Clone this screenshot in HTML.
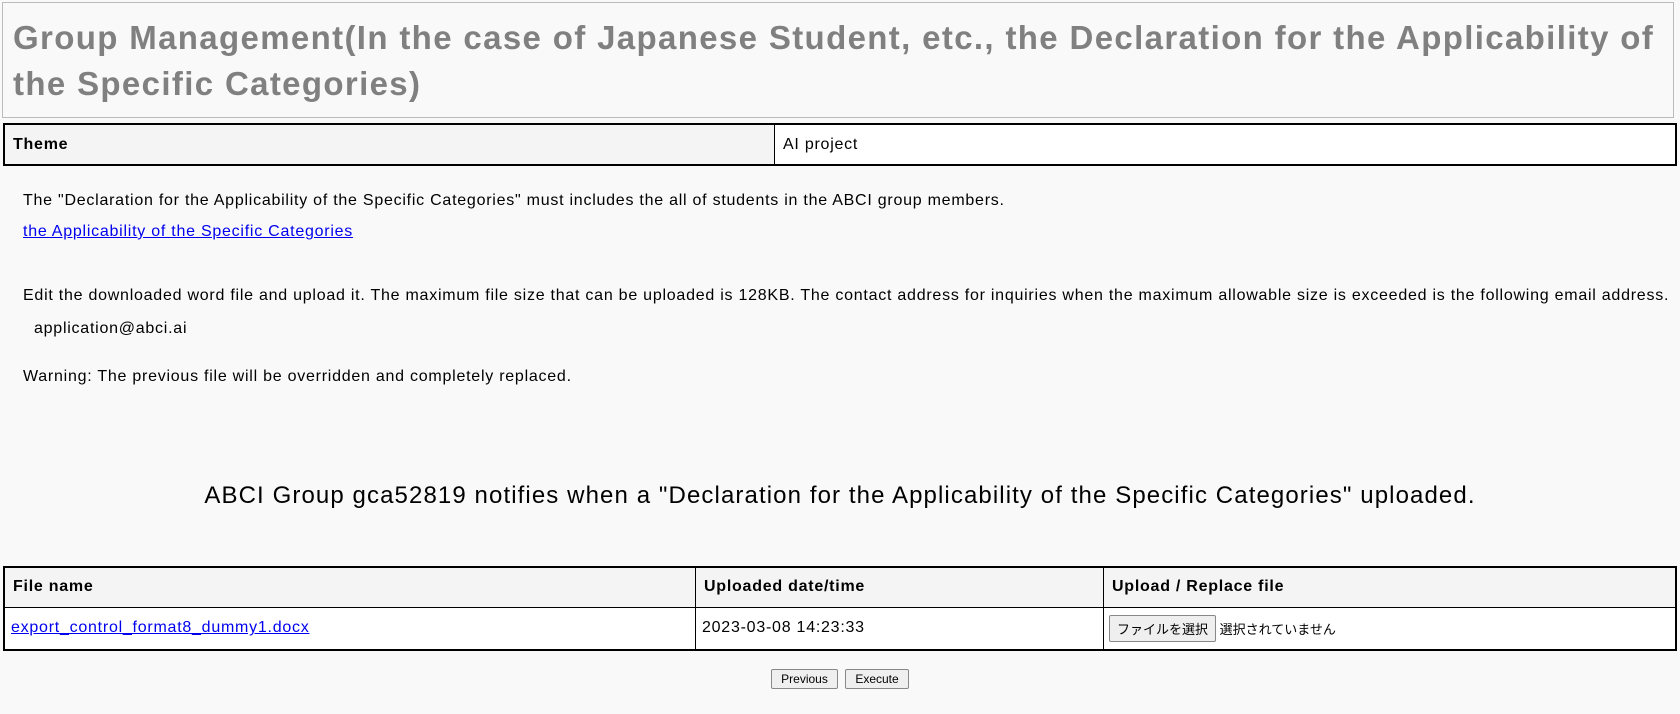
<!DOCTYPE html>
<html><head><meta charset="utf-8"><style>
body{margin:0;background:#f9f9f9;font-family:"Liberation Sans","Noto Sans CJK JP",sans-serif;font-size:16px;letter-spacing:0.75px;color:#000;width:1680px;height:714px;overflow:hidden;position:relative}
.title{position:absolute;left:2px;top:2px;width:1672px;height:116px;border:1px solid #bbb;box-sizing:border-box;}
.title div{position:absolute;left:10px;top:12px;font-size:33px;letter-spacing:1.35px;font-weight:bold;color:#808080;line-height:46px;width:1660px}
.abs{position:absolute;white-space:nowrap}
table{position:absolute;border-collapse:collapse;}
td{border:1px solid #000;padding:0 8px;font-size:16px}
th{border:1px solid #000;padding:0 8px;font-size:16px;text-align:left;background:#f4f4f4}
a{color:#00e}
.btn{position:absolute;height:20px;border:1px solid #888;background:#efefef;font-size:12px;letter-spacing:0;line-height:18px;text-align:center;box-sizing:border-box;border-radius:2px}
</style></head><body>
<div class="title"><div>Group Management(In the case of Japanese Student, etc., the Declaration for the Applicability of the Specific Categories)</div></div>
<table style="left:3px;top:123px;width:1674px;height:43px">
<tr><th style="width:753px;border-width:2px 1px 2px 2px">Theme</th><td style="background:#fff;border-width:2px 2px 2px 1px">AI project</td></tr></table>
<div class="abs" style="left:23px;top:192px">The "Declaration for the Applicability of the Specific Categories" must includes the all of students in the ABCI group members.</div>
<div class="abs" style="left:23px;top:223px"><a href="#">the Applicability of the Specific Categories</a></div>
<div class="abs" style="left:23px;top:287px">Edit the downloaded word file and upload it. The maximum file size that can be uploaded is 128KB. The contact address for inquiries when the maximum allowable size is exceeded is the following email address.</div>
<div class="abs" style="left:34px;top:320px">application@abci.ai</div>
<div class="abs" style="left:23px;top:368px">Warning: The previous file will be overridden and completely replaced.</div>
<div class="abs" style="left:0;width:1680px;text-align:center;top:482px;font-size:24px;letter-spacing:1.1px">ABCI Group gca52819 notifies when a "Declaration for the Applicability of the Specific Categories" uploaded.</div>
<table style="left:3px;top:566px;width:1674px">
<tr style="height:40px"><th style="width:674px;border-top-width:2px;border-left-width:2px">File name</th><th style="width:391px;border-top-width:2px">Uploaded date/time</th><th style="border-top-width:2px;border-right-width:2px">Upload / Replace file</th></tr>
<tr style="height:43px;background:#fff"><td style="padding-left:6px;border-left-width:2px;border-bottom-width:2px"><a href="#">export_control_format8_dummy1.docx</a></td><td style="padding-left:6px;border-bottom-width:2px">2023-03-08 14:23:33</td><td style="padding-left:5px;border-right-width:2px;border-bottom-width:2px;font-size:13px;letter-spacing:0"><span style="display:inline-block;border:1px solid #888;background:#efefef;padding:3px 7px;border-radius:2px">ファイルを選択</span> 選択されていません</td></tr>
</table>
<div class="btn" style="left:771px;top:669px;width:67px">Previous</div>
<div class="btn" style="left:845px;top:669px;width:64px">Execute</div>
</body></html>
